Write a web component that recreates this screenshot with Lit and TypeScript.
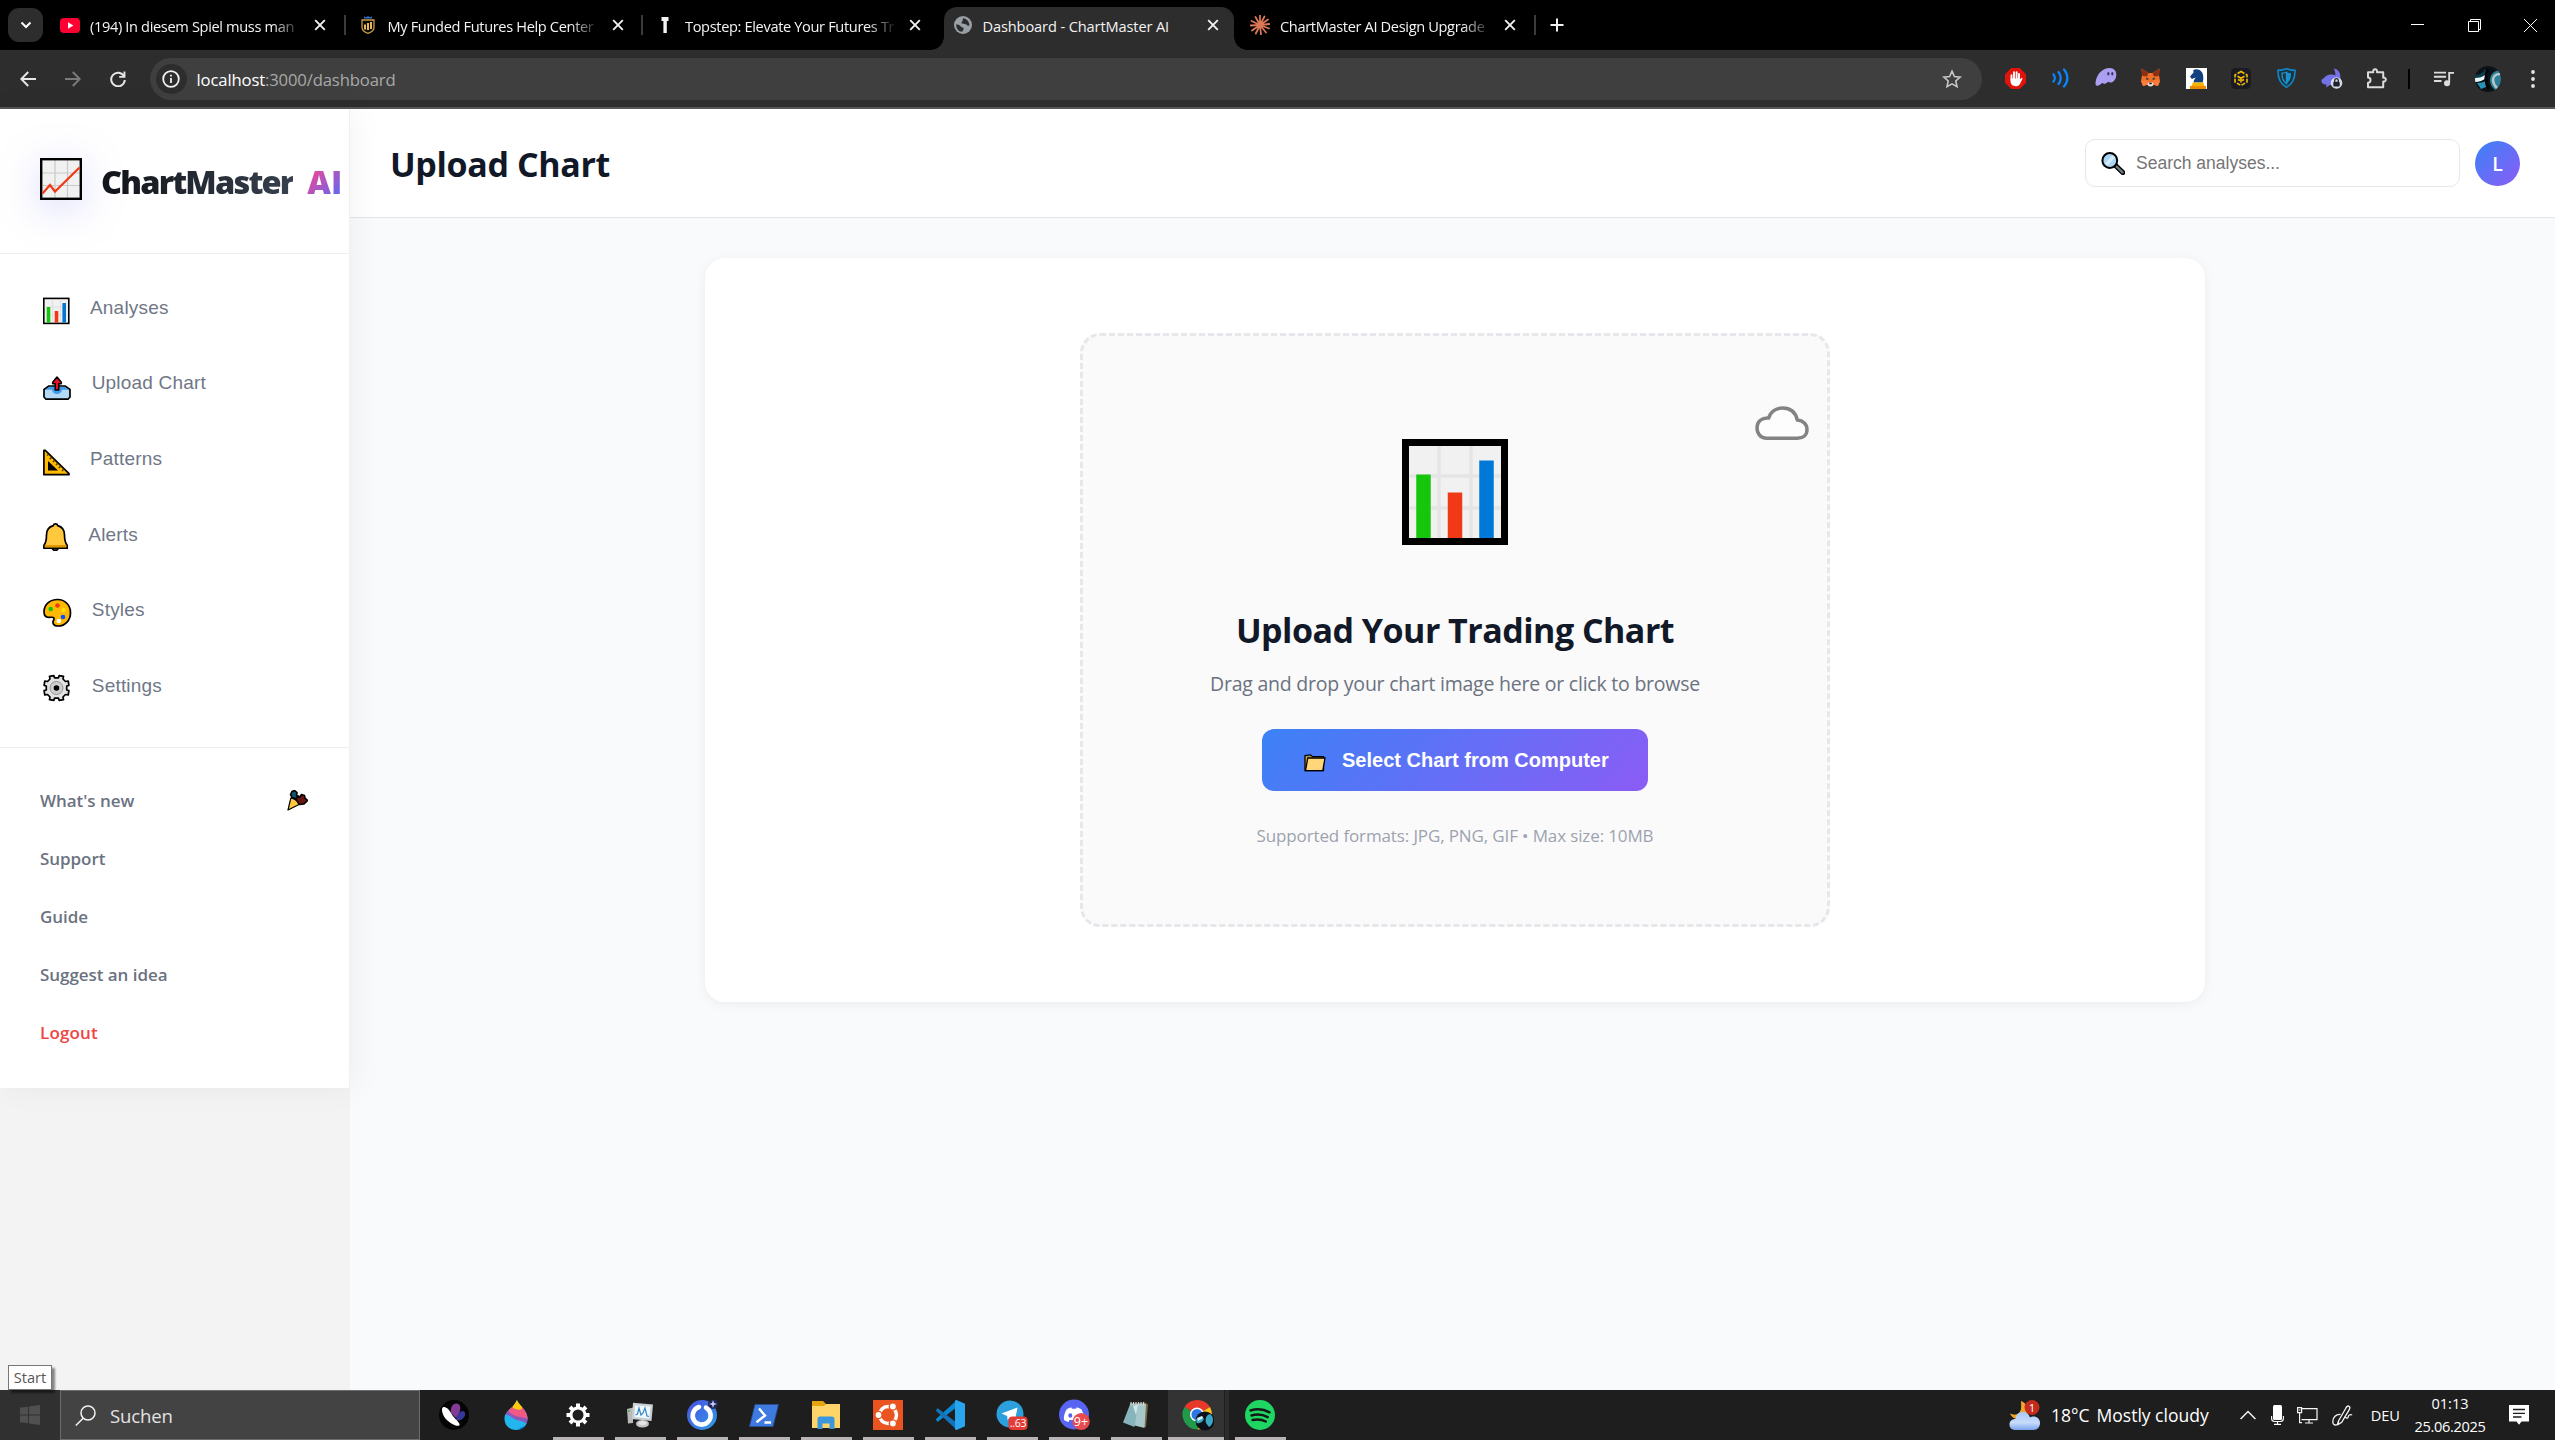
import { LitElement, html, css, nothing } from "lit";
import { customElement } from "lit/decorators.js";

/* ---------- browser icons ---------- */
const chevron = html`<svg width="12" height="8" viewBox="0 0 12 8"><path d="M1.500 1.500 6 6l4.500-4.500" fill="none" stroke="#fff" stroke-width="2"/></svg>`;
const closeX = html`<svg width="12" height="12" viewBox="0 0 12 12"><path d="M1.200 1.200l9.600 9.600M10.800 1.200l-9.600 9.600" stroke="#f1f1f1" stroke-width="1.900"/></svg>`;
const plus = html`<svg width="14" height="14" viewBox="0 0 14 14"><path d="M7 .5v13M.5 7h13" stroke="#f1f1f1" stroke-width="2"/></svg>`;
const youtube = html`<svg width="20" height="15" viewBox="0 0 20 15"><rect width="20" height="15" rx="4" fill="#ff0033"/><path d="M8 4.300v6.400l5.400-3.200z" fill="#fff"/></svg>`;
const shield = html`<svg width="14" height="18" viewBox="0 0 14 18"><path d="M3 .2l1.500 1L7 .2l2.500 1 1.500-1v2.400H3z" fill="#2f6fd0"/><path d="M1 4h12v7.500c0 3-2.500 4.600-6 5.900-3.500-1.300-6-2.900-6-5.900z" fill="#0c0a05" stroke="#c79a45" stroke-width="1.300"/><path d="M4 8.500v5M7 7v7M10 6v7" stroke="#e8b95a" stroke-width="2"/></svg>`;
const topstep = html`<svg width="10" height="16" viewBox="0 0 10 16"><path d="M1.500 0h7v4H6.800v12H3.400V4H1.500z" fill="#f4f4f4"/></svg>`;
const globe = html`<svg width="18" height="18" viewBox="0 0 18 18"><circle cx="9" cy="9" r="9" fill="#9aa0a6"/><path d="M2.200 8.200c2 .2 3.600.8 4.600 2.200.6.900 2 .7 2.600 1.500.6 1-.3 2.200-1.200 3.800C4.500 15.600 2 12.500 2.200 8.200zM9 2.300c-.6 1.600.2 2.500-1 3.400-1 .7-.6 1.500.4 1.900 1.500.6 3.200.2 4.200 1.200.8.800 1.600 1 2.900.8-.1-3.800-2.700-7-6.500-7.300z" fill="#2d2d2d"/></svg>`;
const burst = html`<svg width="20" height="20" viewBox="-10 -10 20 20"><path d="M0 0V-9.500M0 0 4.500-8.500M0 0 8-5.500M0 0 9.500-1M0 0 9 3.500M0 0 6 7.500M0 0 1 9.500M0 0-4.200 8.500M0 0-8 5.500M0 0-9.500.5M0 0-8.500-4M0 0-4.500-8" stroke="#d97757" stroke-width="1.800" stroke-linecap="round"/></svg>`;
const back = html`<svg width="16" height="16" viewBox="0 0 16 16"><path d="M16 8H1.500M8.200 1 1.300 8l6.900 7" fill="none" stroke="#e6e6e6" stroke-width="2"/></svg>`;
const forward = html`<svg width="16" height="16" viewBox="0 0 16 16"><path d="M0 8h14.500M7.800 1l6.900 7-6.900 7" fill="none" stroke="#7a7a7a" stroke-width="2"/></svg>`;
const reload = html`<svg width="16" height="16" viewBox="0 0 16 16"><path d="M14 5.200A6.800 6.800 0 1 0 14.800 9" fill="none" stroke="#e6e6e6" stroke-width="2"/><path d="M15.400.5v6.200H9.200V4.900h4.300V.5z" fill="#e6e6e6"/></svg>`;
const info = html`<svg width="18" height="18" viewBox="0 0 18 18"><circle cx="9" cy="9" r="7.800" fill="none" stroke="#f1f1f1" stroke-width="1.800"/><path d="M9 8v5M9 4.700v1.900" stroke="#f1f1f1" stroke-width="1.800"/></svg>`;
const star = html`<svg class="star" width="20" height="20" viewBox="0 0 20 20"><path d="M10 2.200l2.400 5.300 5.700.6-4.300 3.900 1.200 5.700-5-2.900-5 2.900 1.200-5.700L1.900 8.100l5.700-.6z" fill="none" stroke="#c7c7c7" stroke-width="1.600"/></svg>`;

const adblock = html`<svg width="21" height="21" viewBox="0 0 21 21"><path d="M6.200 0h8.600L21 6.200v8.600L14.800 21H6.200L0 14.800V6.200z" fill="#e1130c"/><path d="M6.500 12.500V7.300M9 11V4.300M11.600 11V4.300M14 12V6" stroke="#fff" stroke-width="1.900" stroke-linecap="round"/><path d="M5.600 10.500h9.300v1l1.700-1.800 1 .9-2.800 5.600c-1 1.500-2.300 2-4 2-3 0-5.200-1.700-5.200-4.600z" fill="#fff"/></svg>`;
const waves = html`<svg width="18" height="20" viewBox="0 0 18 20"><path d="M1.500 6.500c1.700 2 1.700 5 0 7M6.500 4c3 3.500 3 8.500 0 12M12 1.500c4.500 5 4.500 12 0 17" fill="none" stroke="#0a84ff" stroke-width="2.300" stroke-linecap="round"/></svg>`;
const ghost = html`<svg width="22" height="18" viewBox="0 0 22 18"><path d="M.5 15C1 7 7 0 14.500 0 19 0 21.500 3 21.300 7c-.3 5-3.800 8-6.300 7.500-1.200-.2-1.300-1-2-.6-1.500 1-2.500 2-4 1.900-1.500 0-1.200-1-2-.6-1.500.9-3.200 2.600-5 2.600C.9 17.800.4 16.500.5 15z" fill="#ab9ff2"/><ellipse cx="13.300" cy="5.800" rx="1.100" ry="1.700" fill="#3c315b"/><ellipse cx="17.300" cy="5.800" rx="1.100" ry="1.700" fill="#3c315b"/></svg>`;
const fox = html`<svg width="19" height="19" viewBox="0 0 19 19"><path d="M.5.500 7.500 5h4L18.500.500 18 7l1 6-2 5-4.500-1.200-1.500 1.500H8L6.500 16.800 2 18 0 13l1-6z" fill="#f0702a"/><path d="M.5.500 7.500 5 6 8.500 1.300 8zM18.500.500 11.500 5 13 8.500l4.700-.5z" fill="#8f2f12"/><path d="M0 13l6-1 1.200 4.500L2 18zM19 13l-6-1-1.200 4.500L17 18z" fill="#ff7c3c"/><path d="M5.200 9.500l3 1.500-2.600.9zM13.800 9.500l-3 1.500 2.600.9z" fill="#26303a"/><path d="M7 14.500h5l.5 2.300-1.500 1.500H8l-1.500-1.500z" fill="#e6ddd3"/><path d="M8 14.800h3l-.5 1.500h-2z" fill="#1c1c1c"/></svg>`;
const knight = html`<svg width="21" height="21" viewBox="0 0 21 21"><rect width="21" height="21" fill="#fff"/><path d="M7.500 14.500c.3-3 1.500-3.500 2.200-5L5.800 11 4 8.500l3.500-4L7.300 2c5-2 10 .5 10 8 0 2-.3 3.500-.6 4.500z" fill="#123f7d"/><path d="M6.800 14.500h10.500l1.200 3.500H5.500z" fill="#f5b400"/><path d="M4 18h16v3H4z" fill="#f08a00"/></svg>`;
const cube = html`<svg width="20" height="21" viewBox="0 0 20 21"><rect width="20" height="21" rx="4.500" fill="#1a1b22"/><path d="M10 3.500 16 7v7l-6 3.500L4 14V7z" fill="none" stroke="#f5b90a" stroke-width="1.600" stroke-dasharray="4 1.400"/><path d="M6.500 8.200 10 10.300l3.500-2.100M10 10.300v4.200M7 11.500l2 1M13 11.500l-2 1" fill="none" stroke="#f5b90a" stroke-width="1.600"/></svg>`;
const shieldBlue = html`<svg width="19" height="20" viewBox="0 0 19 20"><path d="M1 2.400C4.500 2.300 7 1.700 9.500.8 12 1.700 14.500 2.300 18 2.400c.2 7.500-2 13.400-8.500 16.800C3 15.800.8 9.900 1 2.400z" fill="#1b3442" stroke="#1287c8" stroke-width="1.600"/><path d="M5 5.200c1.800-.1 3-.5 4.500-1v11.600C6.200 13.500 4.900 9.800 5 5.200z" fill="#26343d" stroke="#1f9ad6" stroke-width="1.200"/><path d="M9.500 4.200c1.500.5 2.700.9 4.500 1 .1 4.600-1.200 8.300-4.500 10.600z" fill="#1592d3"/></svg>`;
const rabbit = html`<svg width="22" height="21" viewBox="0 0 22 21"><path d="M12.500.5c4 .5 6.800 3.500 6.800 7.500L20 17H9l-4 2.500.5-3C1.500 17 0 14 .5 12c.4-1 1.500-1.200 2.500-2C5 8 6.500 6.500 10 6.500c2 0 3 .3 4.300 1C14.500 5 14 2.500 12.500.500z" fill="#7572e8"/><circle cx="15.500" cy="15" r="5.800" fill="#d9dbe4"/><rect x="12.300" y="13.800" width="6.400" height="4.800" rx="1" fill="#1c2231"/><path d="M13.700 14v-1.500a1.800 1.800 0 0 1 3.600 0V14" fill="none" stroke="#1c2231" stroke-width="1.300"/></svg>`;
const puzzle = html`<svg width="21" height="21" viewBox="0 0 21 21"><path d="M2 4.200h5.300a2 2 0 1 1 3.600 0h6.300v5.500a2 2 0 1 1 0 3.800v5.700H2v-4.400c3.400 0 3.400-5.400 0-5.400z" fill="none" stroke="#dadada" stroke-width="2" stroke-linejoin="round"/></svg>`;
const mediaList = html`<svg width="20" height="16" viewBox="0 0 20 16"><path d="M0 1.600h12M0 5.800h12M0 10h7.500" stroke="#dcdcdc" stroke-width="1.900"/><path d="M15.200 1v10.500M14.300 1.900H20" fill="none" stroke="#dcdcdc" stroke-width="1.900"/><circle cx="13" cy="12.200" r="3" fill="#dcdcdc"/></svg>`;
const userPic = html`<svg width="26" height="26" viewBox="0 0 26 26"><defs><clipPath id="up"><circle cx="13" cy="13" r="13"/></clipPath></defs><g clip-path="url(#up)"><rect width="26" height="26" fill="#0c1218"/><path d="M0 9c4 0 8-2 10-6l3 3c-3 5-7 6-13 6z" fill="#0d3c4d"/><path d="M0 12c4 0 8-1 11-4l1 3c-4 4-8 5-12 5z" fill="#e9f7fb"/><path d="M2 17c4 0 8-1 10-3l-1 7-5 2z" fill="#2794b4"/><path d="M26 4c-6 0-11 4-11 10 0 5 3 9 7 11l4-3z" fill="#2a7f96"/><path d="M25 8c-5 0-7 3-7 6s2 6 4 8" fill="none" stroke="#b8c6ca" stroke-width="2.500"/><path d="M13 3c-3 6-3 14 1 20" fill="none" stroke="#050505" stroke-width="3"/></g></svg>`;
const dots = html`<svg width="4" height="18" viewBox="0 0 4 18"><circle cx="2" cy="2" r="1.900" fill="#e3e3e3"/><circle cx="2" cy="9" r="1.900" fill="#e3e3e3"/><circle cx="2" cy="16" r="1.900" fill="#e3e3e3"/></svg>`;
const winMin = html`<svg width="13" height="13" viewBox="0 0 13 13"><path d="M0 5.500h13" stroke="#fff"/></svg>`;
const winMax = html`<svg width="13" height="13" viewBox="0 0 13 13"><path d="M.5 2.500h10v10H.5zM2.500 2.500v-2h10v10h-2" fill="none" stroke="#fff"/></svg>`;
const winClose = html`<svg width="13" height="13" viewBox="0 0 13 13"><path d="M0 0l13 13M13 0 0 13" stroke="#fff"/></svg>`;

/* ---------- page icons ---------- */
const trend = html`<svg width="42" height="42" viewBox="0 0 42 42"><rect x="1.200" y="1.200" width="39.600" height="39.600" fill="#f1f1f1"/><path d="M15 2v38M27.500 2v38M2 15h38M2 27.500h38" stroke="#c9c9c9" stroke-width="1.200"/><rect x="1.200" y="1.200" width="39.600" height="39.600" fill="none" stroke="#000" stroke-width="2.400"/><path d="M2.500 35.500 10 27l5 6.500L39.500 9.500" fill="none" stroke="#f03a17" stroke-width="2.200"/></svg>`;
const barsSmall = html`<svg width="28" height="30" viewBox="0 0 28 30"><rect x=".8" y="2.400" width="25" height="25" fill="#f1f1f1" stroke="#000" stroke-width="1.600"/><path d="M9.500 3.500v23M17.500 3.500v23M1.600 11h23.400M1.600 19h23.400" stroke="#dcdcdc" stroke-width=".8"/><path d="M5.500 11v15.600" stroke="#16c60c" stroke-width="3.600"/><path d="M13.500 15v11.600" stroke="#f03a17" stroke-width="3.600"/><path d="M21.200 7v19.600" stroke="#0078d7" stroke-width="3.600"/></svg>`;
const outbox = html`<svg width="28" height="30" viewBox="0 0 28 30"><path d="M1 18.500 6 15h16l5 3.500V26l-2 2.200H3L1 26z" fill="#b3d9f5" stroke="#000" stroke-width="1.700" stroke-linejoin="round"/><path d="M2 18.700 6.300 16h15.400l4.300 2.700H19c-.5 3-2.500 4.300-5 4.300s-4.500-1.300-5-4.300z" fill="#3f9be8"/><path d="M14 6l4.300 5.300v1.400h-2.500V19h-3.600v-6.300H9.700v-1.400z" fill="#e81224" stroke="#000" stroke-width="1.500" stroke-linejoin="round"/></svg>`;
const triangle = html`<svg width="28" height="30" viewBox="0 0 28 30"><path d="M.9 3.400 2.300 3.300 26 26.700v1H.9z" fill="#ffb900" stroke="#000" stroke-width="1.700" stroke-linejoin="round"/><path d="M5 14v9.500h10z" fill="#000"/><path d="M5.500 7.500l-1.500 1M8.500 10.500l-1.800 1.600M11.500 13.500 10 15M14.500 16.500 13 18M17.500 19.500 15.700 21M20.500 22.500 19 24" stroke="#4a3a10" stroke-width="1.500"/></svg>`;
const bell = html`<svg width="26" height="30" viewBox="0 0 26 30"><path d="M9.500 25h5.500v1l-1.200 1.300h-3.100L9.500 26z" fill="#8e562e" stroke="#000" stroke-width="1.600"/><path d="M12.500.9c1.500 0 2 .8 2.200 1.700 4.700 1.200 6.800 4.600 6.800 9.400 0 4.500.3 7.500 2.700 10.200v3H.9v-3C3.300 19.500 3.500 16.500 3.500 12c0-4.800 2.100-8.200 6.800-9.400.2-.9.700-1.700 2.200-1.700z" fill="#ffc83d" stroke="#000" stroke-width="1.700" stroke-linejoin="round"/><path d="M1.800 22h21.500v2.400H1.800z" fill="#dd9a00"/></svg>`;
const palette = html`<svg width="29" height="30" viewBox="0 0 29 30"><path d="M14.500 1.500C7 1.500 1 6.500 1 13.700c0 4 2 5.600 5 5.600 3.200 0 4.500-.4 5 .7.700 1.500-1.500 2.500-1 5 .4 2 2.400 3 5 3 7.500 0 12.500-6 12.500-13.200C27.500 7 22 1.500 14.500 1.500z" fill="#ffb900" stroke="#000" stroke-width="1.700"/><circle cx="7.700" cy="11" r="2.300" fill="#16c60c"/><circle cx="14.500" cy="7.500" r="2.300" fill="#f03a17"/><circle cx="20.500" cy="12" r="2.200" fill="#ffe100"/><circle cx="20" cy="19" r="2.300" fill="#0a50ff"/><circle cx="15.800" cy="23" r="2.300" fill="#fff"/></svg>`;
const gearPage = html`<svg width="28" height="30" viewBox="-13.500 -14 28 30"><path d="M-2-10.200-2.600-12.400-7-11.700-6.500-9-9-6.500-11.700-7-12.400-2.600-10.200-2V2l-2.200.6.700 4.400L-9 6.500-6.500 9l-.5 2.700 4.400.7L-2 10.200h4l.6 2.200 4.400-.7L6.500 9 9 6.500l2.700.5.700-4.400L10.200 2v-4l2.200-.6L11.700-7 9-6.500 6.500-9l.5-2.700-4.400-.7-.6 2.200z" fill="#e4e4e4" stroke="#000" stroke-width="1.700" stroke-linejoin="round"/><circle r="6.500" fill="#cfcfcf" stroke="#8a8a8a" stroke-width=".9"/><circle r="2.800" fill="#000"/></svg>`;
const party = html`<svg width="21" height="21" viewBox="0 0 21 21"><path d="M3.500 4.500 5 1.500 7.500.5 10 2.500 9.500 5.500l2.500.8L9.500 9 5 7.500z" fill="#15566f" stroke="#000" stroke-width="1.600" stroke-linejoin="round"/><path d="M9.500 7.500 13 7l1.500-2.500 3 1 .5 2.500 2.500 2.500-3.500 3.500-4.500.5-3-3z" fill="#6b1512" stroke="#000" stroke-width="1.600" stroke-linejoin="round"/><path d="M1 20 3.800 8.200c2.500-.5 7 2.800 8.200 6.300z" fill="#ffc83d" stroke="#000" stroke-width="1.200" stroke-linejoin="round"/></svg>`;
const magnifier = html`<svg width="24" height="23" viewBox="0 0 24 23"><path d="M14 13l7.800 7.500" stroke="#000" stroke-width="5.200" stroke-linecap="round"/><path d="M15.500 14.500l6 5.800" stroke="#6f7e85" stroke-width="2.400" stroke-linecap="round"/><circle cx="8.800" cy="8.500" r="7.400" fill="#a9d6f5" stroke="#000" stroke-width="2"/><path d="M3.800 11.500 11.500 3.300a5.800 5.800 0 0 1 2.700 2.300l-7.500 8z" fill="#d3ecfb"/></svg>`;
const barsBig = html`<svg width="106" height="106" viewBox="0 0 106 106"><rect x="3.500" y="3.500" width="99" height="99" fill="#f1f1f1"/><path d="M37 7v92M69 7v92M7 37h92M7 69h92" stroke="#e5e5e5" stroke-width="3.500"/><rect x="3.500" y="3.500" width="99" height="99" fill="none" stroke="#000" stroke-width="7"/><path d="M21.500 35.500V99" stroke="#16c60c" stroke-width="14.500"/><path d="M53 53.500V99" stroke="#f03a17" stroke-width="14.500"/><path d="M84.500 21.500V99" stroke="#0078d7" stroke-width="14.500"/></svg>`;
const cloud = html`<svg width="54" height="35" viewBox="0 0 54 35"><path d="M11.500 32.300C5.500 32.300 2 27.500 2 21.800c0-6.300 5-10.500 11.700-9.800C15.500 5.500 21 2 27.500 2 35 2 40.500 6 42.300 14c6 .5 9.700 4.500 9.700 9.500 0 5.500-4 8.800-9.500 8.800z" fill="#fff" fill-opacity=".6" stroke="#838383" stroke-width="3.500" stroke-linejoin="round"/></svg>`;
const folder = html`<svg width="22" height="18" viewBox="0 0 22 18"><path d="M1 16.700V1.500l5.500-.6 2 1.800h11v14z" fill="#e8a400" stroke="#000" stroke-width="1.300"/><path d="M1.500 16.700 3.800 4h17.200l-2.200 12.700z" fill="#ffd67a" stroke="#000" stroke-width="1.300"/><path d="M3 2.500l3-.3" stroke="#3aa0e8" stroke-width="1"/></svg>`;

/* ---------- taskbar icons ---------- */
const winLogo = html`<svg width="20" height="20" viewBox="0 0 20 20"><path d="M0 2.800 8 1.700v7.800H0zM9 1.500 20 0v9.500H9zM0 10.500h8v7.800l-8-1.100zM9 10.500h11V20L9 18.500z" fill="#505050"/></svg>`;
const searchTask = html`<svg width="21" height="21" viewBox="0 0 21 21"><circle cx="13" cy="8" r="7" fill="none" stroke="#f3f3f3" stroke-width="1.500"/><path d="M8.200 13.200.8 20.500" stroke="#f3f3f3" stroke-width="1.500"/></svg>`;
const appPetals = html`<svg width="30" height="30" viewBox="0 0 30 30"><circle cx="15" cy="15" r="15" fill="#040405"/><path d="M12 13C11 7 14 3 18 3.500c5 .8 4 9-1 14.500z" fill="#843a96"/><path d="M17 20c1-6 4-9 7-9 4 1 2.500 8-4 9.500z" fill="#36379b"/><path d="M3 9c1-4 6-1.500 9 4 2.500 5 6.500 7 8.500 11 .5 2-2 2.500-5 1C8 22 2.500 15 3 9z" fill="#fff"/></svg>`;
const paintDrop = html`<svg width="24" height="30" viewBox="0 0 24 30"><defs><clipPath id="pd"><path d="M13 0c1.500 5 10.500 10 10.500 18.500C23.500 26 18 30 12 30S.5 26 .5 18.500C.5 11 9 9 13 0z"/></clipPath></defs><g clip-path="url(#pd)"><rect width="24" height="30" fill="#22b5ee"/><path d="M0 15c6-1 8 4 13 5s8 2 11 5V8H0z" fill="#8d56b8"/><path d="M4 10c4 8 14 6 20 9V6H8z" fill="#ef5a84"/><path d="M9 0v8c4 2 7 2 9 1V0z" fill="#ffca0a"/><path d="M14 30c3-4 8-3 10-7v7z" fill="#0c7bd8"/></g></svg>`;
const gearTask = html`<svg width="24" height="24" viewBox="-12 -12 24 24"><circle r="7" fill="none" stroke="#fff" stroke-width="3"/><path d="M0-11.500v4M0 11.500v-4M-11.500 0h4M11.500 0h-4M-8-8l2.600 2.600M8-8 5.400-5.400M-8 8l2.600-2.600M8 8 5.400 5.400" stroke="#fff" stroke-width="4"/></svg>`;
const monitorApp = html`<svg width="28" height="26" viewBox="0 0 28 26"><path d="M1 7l6-1.500V21l-5 .5z" fill="#b9b9b9"/><path d="M1.800 9h2" stroke="#34c032" stroke-width="1.500"/><path d="M7 .8 27 2.500 25.500 19 6 17z" fill="#c9cfd2"/><path d="M9 3.200l15.500 1.300-1.200 12L8.300 15z" fill="#f0f8fc"/><path d="M9.500 13l2-1 1.500-6 2 7 2-2 2-5 2 8 2 .5" fill="none" stroke="#3587c9" stroke-width="1.200"/><ellipse cx="16.500" cy="21.800" rx="6.500" ry="3.800" fill="#c4c4c4"/><ellipse cx="16.500" cy="21" rx="4" ry="2" fill="#e6e6e6"/></svg>`;
const ringApp = html`<svg width="31" height="30" viewBox="0 0 31 30"><defs><linearGradient id="rg" x1="0" y1="0" x2="1" y2="1"><stop offset="0" stop-color="#4a4fe0"/><stop offset="1" stop-color="#2f9de8"/></linearGradient></defs><circle cx="15" cy="15" r="15" fill="url(#rg)"/><circle cx="26" cy="4" r="5" fill="#222657"/><path d="M19 7.700A9 9 0 1 1 12 7" fill="none" stroke="#fff" stroke-width="4.600" stroke-linecap="round"/><path d="M26 0l1 3 3 1-3 1-1 3-1-3-3-1 3-1z" fill="#c8ccff"/></svg>`;
const powershell = html`<svg width="30" height="23" viewBox="0 0 30 23"><path d="M6 .5h23.500L24 22.500H.5z" fill="#3f7ae0" stroke="#274f98" stroke-width=".8"/><path d="M10 4.500l6 7-8.500 6.700M15.500 18.500h6.500" fill="none" stroke="#fff" stroke-width="2.400"/></svg>`;
const explorer = html`<svg width="28" height="28" viewBox="0 0 28 28"><path d="M0 0h11l3 3-2 6H0z" fill="#e8a40c"/><path d="M0 5h12l2-2h14v24H0z" fill="#ffd468"/><path d="M5.500 28V18c0-1.500 1-2.500 2.500-2.500h12c1.500 0 2.500 1 2.500 2.500v10h-5v-5.500h-7V28z" fill="#3d97dc"/></svg>`;
const ubuntu = html`<svg width="30" height="30" viewBox="-15 -15 30 30"><rect x="-15" y="-15" width="30" height="30" fill="#e95420"/><circle r="8.500" fill="none" stroke="#fff" stroke-width="3.400"/><g fill="#fff" stroke="#e95420" stroke-width="1.400"><circle cx="-9.500" cy="0" r="3.600"/><circle cx="4.900" cy="-8.500" r="3.600"/><circle cx="4.900" cy="8.500" r="3.600"/></g></svg>`;
const vscode = html`<svg width="30" height="30" viewBox="0 0 30 30"><path d="M22 0 .8 19.300 2.500 22 22 7z" fill="#0b86d1"/><path d="M22 30 .8 10.700 2.500 8 22 23z" fill="#1273b8"/><path d="M21.500 0 30 3.800v22.400L21.500 30l-1.500-.6V.6z" fill="#29a5ee"/></svg>`;
const telegram = html`<svg width="32" height="32" viewBox="0 0 32 32"><circle cx="14" cy="15" r="13.500" fill="#2ba0dc"/><path d="M5.500 14.500 21.500 8.500l-2.700 13.800-5-3.500-2.300 2.200-.3-4z" fill="#fff"/><rect x="12.500" y="17.500" width="19" height="13.500" rx="4" fill="#e53b36"/><text x="22" y="28.300" text-anchor="middle" font-family="Open Sans, sans-serif" font-size="10.500" fill="#fff" letter-spacing="-.3">..63</text></svg>`;
const discord = html`<svg width="32" height="32" viewBox="0 0 32 32"><circle cx="16" cy="15.500" r="15" fill="#5865f2"/><path d="M8.500 10.500c2-1.500 4-2 5-2l.5 1.300h4l.5-1.300c1 0 3 .5 5 2 2 3.500 3 7 2.500 10.500-1.500 1-3 1.700-4.500 2l-1-2h-9l-1 2c-1.500-.3-3-1-4.500-2-.5-3.500.5-7 2.500-10.500z" fill="#fff"/><ellipse cx="12.300" cy="16.500" rx="2" ry="2.200" fill="#5865f2"/><circle cx="23.200" cy="22.500" r="8.600" fill="#ea4b50"/><text x="23" y="27.200" text-anchor="middle" font-family="Open Sans, sans-serif" font-size="12.500" fill="#fff">9+</text></svg>`;
const notepad = html`<svg width="30" height="30" viewBox="0 0 30 30"><path d="M9.500 4 24 2.500l3 2L25 27l-10-1z" fill="#7e6a42"/><path d="M9 3.500 25 4l-1.500 24L12 25z" fill="#a6c8ca"/><path d="M9 4.500l8 .3L13.500 27 2 22.500z" fill="#86b5bb"/><path d="M12 6l5-1.200L15 15z" fill="#d4e7e8"/><path d="M10 2v3.500M12.500 2v3.500M15 2v3.500M17.500 2v3.500M20 2v3.500M22.500 2v3.500" stroke="#d6d6d6" stroke-width="1.200"/></svg>`;
const chrome = html`<svg width="32" height="32" viewBox="0 0 32 32"><path d="M15 15.500 2.500 8A15 15 0 0 1 28 8z" fill="#e8382c"/><path d="M15 15.500 28 8a15 15 0 0 1-12 22.500z" fill="#fbc21b"/><path d="M15 15.500 16 30.500A15 15 0 0 1 2.500 8z" fill="#219a4b"/><circle cx="15" cy="15.500" r="7" fill="#fff"/><circle cx="15" cy="15.500" r="5.500" fill="#2f75e5"/><circle cx="23" cy="22" r="9.500" fill="#0d1218"/><path d="M14 20c3 1 5-1 6-3l2 3c-2 4-5 5-7.500 4zM28 15c-4 1-5 5-4 9l3 4c4-2 5-8 3-11z" fill="#3aa7c4"/><path d="M15 19l5-2 1 2-5 3z" fill="#dff5fa"/></svg>`;
const spotify = html`<svg width="30" height="30" viewBox="0 0 30 30"><circle cx="15" cy="15" r="15" fill="#1fd662"/><path d="M5.500 10.500c6-1.800 13.500-1.200 19 1.800M6.500 15.500c5.500-1.500 11.500-.9 16.200 1.700M7.500 20c4.700-1.100 9.300-.7 13.300 1.500" fill="none" stroke="#161616" stroke-width="2.500" stroke-linecap="round"/></svg>`;
const weather = html`<svg width="32" height="32" viewBox="0 0 32 32"><path d="M12 2c0 5 1 9-2 12-2.500 2.300-6 2-9 .5 2 5.500 10 8 16 3C22 12 18 4 12 2z" fill="#f0a72a"/><defs><linearGradient id="wc" x1="0" y1="0" x2="0" y2="1"><stop offset="0" stop-color="#a9c8f8"/><stop offset=".6" stop-color="#c8dcfb"/><stop offset="1" stop-color="#7ba4ec"/></linearGradient></defs><path d="M6.500 31C2.500 31 .5 28.500.5 25.500c0-3.300 2.500-5.500 6-5.500C7 15.500 10 13 13.500 13c4 0 6.500 2 7.500 5.500 1-.8 2-1 3.500-1 3.500 0 6.500 2.500 6.500 6.500s-2.500 7-6.500 7z" fill="url(#wc)"/><circle cx="23" cy="8.500" r="7.500" fill="#c42b1c"/><text x="23" y="12.600" text-anchor="middle" font-family="Open Sans, sans-serif" font-size="11.500" fill="#fff">1</text></svg>`;
const trayUp = html`<svg width="16" height="10" viewBox="0 0 16 10"><path d="M.6 9 8 1.500 15.400 9" fill="none" stroke="#f5f5f5" stroke-width="1.500"/></svg>`;
const mic = html`<svg width="13" height="20" viewBox="0 0 13 20"><rect x="2" y="0" width="9" height="15" rx="1.500" fill="#fff"/><path d="M.6 11v2.500c0 2 1 3 3 3h5.800c2 0 3-1 3-3V11M6.500 17v2.400M3 19.400h7" fill="none" stroke="#fff" stroke-width="1.100"/></svg>`;
const network = html`<svg width="21" height="17" viewBox="0 0 21 17"><path d="M5 1.600h15v11H4.500M.6.600h4v5h-4zM2.600 5.600v10H5M8 16h8M12 12.600V16M1.700 3h1.800" fill="none" stroke="#f5f5f5" stroke-width="1.200"/></svg>`;
const pen = html`<svg width="21" height="21" viewBox="0 0 21 21"><path d="M6.500 16 13.800 3.200c.8-1.500 2-2.700 3.200-2s.9 2.300.1 3.700L9.700 17.400l-3.600 2.200z" fill="none" stroke="#f5f5f5" stroke-width="1.300"/><path d="M8.500 9.500C4 9 .8 12.500.8 16.500c0 2 1.200 3.500 3 3.500 2.200 0 2.500-2 2.700-4M13 11.500c1.500 2.500 3 2 3.200.5.200-1.600 1.500-3 4-2" fill="none" stroke="#f5f5f5" stroke-width="1.300"/></svg>`;
const notify = html`<svg width="20" height="20" viewBox="0 0 20 20"><path d="M0 0h20v16.500h-7.500L10 19.800l-2.500-3.300H0z" fill="#fff"/><path d="M4 4.500h12M4 8.300h12M4 12h8.500" stroke="#1e1e1e" stroke-width="1.300"/></svg>`;

interface Tab { icon: unknown; title: string; active?: boolean; noSep?: boolean }
const tabs: Tab[] = [
  { icon: youtube, title: "(194) In diesem Spiel muss man" },
  { icon: shield, title: "My Funded Futures Help Center" },
  { icon: topstep, title: "Topstep: Elevate Your Futures Tr", noSep: true },
  { icon: globe, title: "Dashboard - ChartMaster AI", active: true, noSep: true },
  { icon: burst, title: "ChartMaster AI Design Upgrade" },
];
const extensions = [adblock, waves, ghost, fox, knight, cube, shieldBlue, rabbit, puzzle];

const navItems = [
  { icon: barsSmall, label: "Analyses", w: 27 },
  { icon: outbox, label: "Upload Chart", w: 28.7 },
  { icon: triangle, label: "Patterns", w: 26.9 },
  { icon: bell, label: "Alerts", w: 25.3 },
  { icon: palette, label: "Styles", w: 28.8 },
  { icon: gearPage, label: "Settings", w: 28.8 },
];
const footItems: { label: string; icon?: unknown; danger?: boolean }[] = [
  { label: "What's new", icon: party },
  { label: "Support" },
  { label: "Guide" },
  { label: "Suggest an idea" },
  { label: "Logout", danger: true },
];
const taskApps: { icon: unknown; open?: boolean; active?: boolean }[] = [
  { icon: appPetals }, { icon: paintDrop },
  { icon: gearTask, open: true }, { icon: monitorApp, open: true }, { icon: ringApp, open: true },
  { icon: powershell, open: true }, { icon: explorer, open: true }, { icon: ubuntu, open: true },
  { icon: vscode, open: true }, { icon: telegram, open: true }, { icon: discord, open: true },
  { icon: notepad, open: true }, { icon: chrome, open: true, active: true }, { icon: spotify, open: true },
];

@customElement("app-root")
class AppRoot extends LitElement {
  static styles = css`
    :host { display: block; width: 2555px; height: 1440px; overflow: hidden; position: relative; font-family: "Open Sans", "Noto Sans", sans-serif; background: #f9fafc; }
    * { box-sizing: border-box; }
    svg { display: block; flex: none; }
    .screen { display: flex; flex-direction: column; height: 1440px; }

    .strip { height: 50px; background: #000; display: flex; align-items: center; flex: none; }
    .tabsearch { width: 35px; height: 34px; margin: 0 4px 0 8px; border-radius: 11px; background: #2d2d2d; display: flex; align-items: center; justify-content: center; }
    .tab { width: 297.500px; height: 50px; display: flex; align-items: center; position: relative; }
    .tabicon { width: 46px; display: flex; justify-content: center; z-index: 1; }
    .tabtitle { width: 212px; margin: 1px 0 0 -3px; overflow: hidden; white-space: nowrap; font-size: 14.600px; line-height: 24px; color: #f3f3f3; z-index: 1; letter-spacing: -0.350px; }
    .tab.active .tabtitle { letter-spacing: -0.120px; }
    .fade { -webkit-mask-image: linear-gradient(90deg, #000 86%, transparent 100%); mask-image: linear-gradient(90deg, #000 86%, transparent 100%); }
    .tabclose { margin-left: 12px; z-index: 1; }
    .sep { position: absolute; right: -1px; top: 15px; width: 2px; height: 20px; background: #3b3b3b; }
    .tab.active::before { content: ""; position: absolute; left: 4px; right: 3px; top: 7px; bottom: 0; background: #2d2d2d; border-radius: 13px 13px 0 0; }
    .tab.active::after { content: ""; position: absolute; left: -9px; right: -10px; bottom: 0; height: 13px;
      background: radial-gradient(circle at 0 0, transparent 12.500px, #2d2d2d 13px) left / 13px 13px no-repeat, radial-gradient(circle at 100% 0, transparent 12.500px, #2d2d2d 13px) right / 13px 13px no-repeat; }
    .newtab { margin-left: 15px; }
    .wincontrols { margin-left: auto; display: flex; gap: 43.500px; padding-right: 18px; }

    .toolbar { height: 59px; background: linear-gradient(#2d2d2d 0 57px, #555 57px 59px); display: flex; align-items: center; padding-bottom: 2px; flex: none; }
    .navbtn { width: 45px; display: flex; justify-content: center; }
    .navbtn.first { margin-left: 5px; }
    .address { margin-left: 9.500px; width: 1832px; height: 42px; border-radius: 21px; background: #3f3f3f; display: flex; align-items: center; padding: 0 20px 0 6px; }
    .site { width: 31px; height: 30px; border-radius: 50%; background: #2d2d2d; display: flex; align-items: center; justify-content: center; }
    .url { margin: 1px 0 0 10px; font-size: 16.700px; letter-spacing: -0.160px; color: #a8a8a8; }
    .url b { font-weight: 400; color: #fff; }
    .star { margin-left: auto; }
    .exts { display: flex; margin-left: 11.500px; }
    .ext { width: 45.150px; display: flex; justify-content: center; }
    .extsep { width: 2px; height: 20px; background: #000; margin-left: 9px; }
    .media { margin-left: 24px; }
    .user { margin-left: 21px; }
    .menu { margin-left: 30px; }

    .page { flex: 1; display: flex; min-height: 0; background: #f3f3f3; }
    .side { width: 350px; height: 979px; background: #fff; border-right: 1px solid #f0f0f1; box-shadow: 4px 0 30px rgba(0, 0, 0, 0.050); position: relative; z-index: 2; flex: none; }
    .brand { height: 145px; border-bottom: 1px solid #eeeef0; display: flex; align-items: center; padding-left: 40px; white-space: nowrap; }
    .brand svg { margin-top: -5px; filter: drop-shadow(0 8px 20px rgba(99, 102, 241, 0.250)); }
    .name, .ai { margin-top: 2px; font-size: 32.500px; line-height: 44px; font-weight: 800; -webkit-background-clip: text; background-clip: text; color: transparent; }
    .name { margin-left: 19px; letter-spacing: -1.800px; background-image: linear-gradient(90deg, #111317, #37414f); }
    .ai { margin-left: 14px; background-image: linear-gradient(135deg, #ec4899 20%, #6366f1 85%); }
    .nav { height: 494px; padding: 16px 0 0 43px; border-bottom: 1px solid #eeeef0; }
    .navitem { height: 75.600px; display: flex; align-items: center; font: 19px/24px "Liberation Sans", Arial, sans-serif; letter-spacing: 0.190px; color: #6f7787; }
    .navicon { margin: 6px 20px 0 0; overflow: visible; }
    .foot { padding-top: 23px; }
    .footitem { height: 58px; display: flex; align-items: center; justify-content: space-between; padding: 0 41px 0 40px; font-size: 17px; letter-spacing: -0.050px; font-weight: 600; color: #6b7280; }
    .footitem.danger { color: #ef4444; letter-spacing: 0.150px; }

    .main { flex: 1; background: #f9fafc; min-width: 0; }
    .head { height: 109px; background: #fff; border-bottom: 1px solid #e5e7eb; display: flex; align-items: center; padding: 0 35px 0 40px; }
    .title { margin-top: 1px; font-size: 34px; line-height: 44px; font-weight: 700; color: #111827; letter-spacing: -0.360px; }
    .search { margin-left: auto; width: 375px; height: 48px; border: 1px solid #e5e7eb; border-radius: 10px; display: flex; align-items: center; padding-left: 15px; gap: 11px; font: 17.500px/22px "Liberation Sans", Arial, sans-serif; color: #757575; }
    .avatar { margin-left: 15px; width: 45px; height: 45px; border-radius: 50%; background: linear-gradient(135deg, #3b82f6, #8b5cf6); color: #fff; font-size: 19.500px; font-weight: 600; display: flex; align-items: center; justify-content: center; }
    .card { width: 1500px; height: 744px; margin: 40px 0 0 355px; padding: 75px 375px; background: #fff; border-radius: 20px; box-shadow: 0 2px 12px rgba(0, 0, 0, 0.060); }
    .drop { position: relative; height: 594px; border: 3px dashed #e5e7eb; border-radius: 20px; background: #fafafa; display: flex; flex-direction: column; align-items: center; padding-top: 103px; }
    .cloud { position: absolute; left: 672px; top: 70px; }
    .h2 { margin-top: 62.500px; font-size: 34px; line-height: 44px; font-weight: 700; color: #111827; white-space: nowrap; letter-spacing: -0.520px; }
    .p { margin-top: 17px; font-size: 19.500px; line-height: 30px; color: #6b7280; white-space: nowrap; letter-spacing: -0.227px; }
    .button { margin-top: 30.500px; width: 386px; height: 62px; border-radius: 12px; background: linear-gradient(135deg, #3b82f6, #8b5cf6); display: flex; align-items: center; padding-left: 42px; gap: 16px; color: #fff; font: bold 20px/24px "Liberation Sans", Arial, sans-serif; white-space: nowrap; }
    .button svg { margin-top: 5px; }
    .hint { margin-top: 32px; font-size: 17px; line-height: 26px; color: #9ca3af; white-space: nowrap; letter-spacing: -0.125px; }

    .tip { position: absolute; left: 8px; top: 1365px; width: 44px; height: 25px; border: 1px solid #767676; background: #fff; color: #575757; font-size: 14.600px; line-height: 23px; text-align: center; box-shadow: 3px 3px 2px rgba(0, 0, 0, 0.450); z-index: 5; }
    .task { height: 50px; background: #1e1e1e; display: flex; align-items: center; flex: none; color: #fff; z-index: 3; white-space: nowrap; }
    .start { width: 60px; height: 50px; background: #303030; display: flex; align-items: center; justify-content: center; }
    .tasksearch { width: 360px; height: 50px; background: #434343; border: 1px solid #6c6c6c; display: flex; align-items: center; padding-left: 14px; gap: 14px; font-size: 18.600px; color: #e2e2e2; letter-spacing: -0.150px; }
    .apps { display: flex; margin-left: 3px; }
    .app { width: 62px; height: 50px; display: flex; align-items: center; justify-content: center; position: relative; }
    .app.open::after { content: ""; position: absolute; left: 5.500px; right: 5.500px; bottom: 0; height: 3px; background: #b8b3b7; }
    .app.active::before { content: ""; position: absolute; left: 1px; width: 61px; top: 0; bottom: 0; background: linear-gradient(90deg, #333 0 56px, #1e1e1e 56px 57px, #2c2c2c 57px); }
    .app.active svg { z-index: 1; }
    .app.active::after { left: 1px; right: 5px; }
    .tray { margin-left: auto; display: flex; align-items: center; }
    .temp { margin-left: 10px; font-size: 17.500px; }
    .sky { margin-left: 7px; font-size: 17.500px; }
    .trayup { margin: 0 15px 0 31px; }
    .network { margin: 0 14px 0 13px; }
    .lang { margin-left: 18px; font-size: 14.600px; }
    .clock { margin-left: 10px; display: flex; flex-direction: column; align-items: center; width: 80px; font-size: 14.600px; line-height: 23px; }
    .date { letter-spacing: -0.330px; }
    .note { margin: 0 26px 0 19px; }
  `;

  render() {
    return html`
      <div class="screen">
        <div class="strip">
          <div class="tabsearch">${chevron}</div>
          ${tabs.map((t) => html`<div class="tab ${t.active ? "active" : ""}">
            <div class="tabicon">${t.icon}</div>
            <div class="tabtitle ${t.active ? "" : "fade"}">${t.title}</div>
            <div class="tabclose">${closeX}</div>
            ${t.noSep ? nothing : html`<div class="sep"></div>`}
          </div>`)}
          <div class="newtab">${plus}</div>
          <div class="wincontrols">${winMin}${winMax}${winClose}</div>
        </div>
        <div class="toolbar">
          <div class="navbtn first">${back}</div><div class="navbtn">${forward}</div><div class="navbtn">${reload}</div>
          <div class="address"><div class="site">${info}</div><div class="url"><b>localhost</b>:3000/dashboard</div>${star}</div>
          <div class="exts">${extensions.map((e) => html`<div class="ext">${e}</div>`)}</div>
          <div class="extsep"></div>
          <div class="media">${mediaList}</div><div class="user">${userPic}</div><div class="menu">${dots}</div>
        </div>
        <div class="page">
          <div class="side">
            <div class="brand">${trend}<span class="name">ChartMaster</span><span class="ai">AI</span></div>
            <div class="nav">
              ${navItems.map((n) => html`<div class="navitem"><div class="navicon" style="width:${n.w}px">${n.icon}</div><span>${n.label}</span></div>`)}
            </div>
            <div class="foot">
              ${footItems.map((f) => html`<div class="footitem ${f.danger ? "danger" : ""}"><span>${f.label}</span>${f.icon ?? nothing}</div>`)}
            </div>
          </div>
          <div class="main">
            <div class="head">
              <div class="title">Upload Chart</div>
              <div class="search">${magnifier}<span>Search analyses...</span></div>
              <div class="avatar">L</div>
            </div>
            <div class="card">
              <div class="drop">
                <div class="cloud">${cloud}</div>
                ${barsBig}
                <div class="h2">Upload Your Trading Chart</div>
                <div class="p">Drag and drop your chart image here or click to browse</div>
                <div class="button">${folder}<span>Select Chart from Computer</span></div>
                <div class="hint">Supported formats: JPG, PNG, GIF • Max size: 10MB</div>
              </div>
            </div>
          </div>
        </div>
        <div class="task">
          <div class="start">${winLogo}</div>
          <div class="tasksearch">${searchTask}<span>Suchen</span></div>
          <div class="apps">${taskApps.map((a) => html`<div class="app ${a.open ? "open" : ""} ${a.active ? "active" : ""}">${a.icon}</div>`)}</div>
          <div class="tray">
            ${weather}<span class="temp">18°C</span><span class="sky">Mostly cloudy</span>
            <div class="trayup">${trayUp}</div>${mic}<div class="network">${network}</div>${pen}
            <span class="lang">DEU</span>
            <div class="clock"><span>01:13</span><span class="date">25.06.2025</span></div>
            <div class="note">${notify}</div>
          </div>
        </div>
      </div>
      <div class="tip">Start</div>
    `;
  }
}
